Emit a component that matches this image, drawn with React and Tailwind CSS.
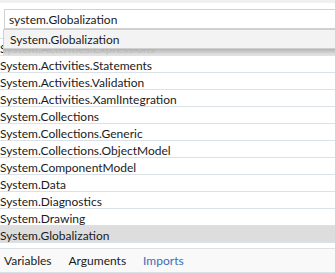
const rows = [
  "System.Activities.Expressions",
  "System.Activities.Statements",
  "System.Activities.Validation",
  "System.Activities.XamlIntegration",
  "System.Collections",
  "System.Collections.Generic",
  "System.Collections.ObjectModel",
  "System.ComponentModel",
  "System.Data",
  "System.Diagnostics",
  "System.Drawing",
  "System.Globalization",
  "System.IO",
  "System.Linq",
];

export default function App() {
  return (
    <div className="w-[335px] h-[273px] bg-white flex flex-col overflow-hidden text-[12px] text-[#1b1b1b] font-['Lato',sans-serif]">
      <div className="h-[3px] bg-[#f0f0f0] shrink-0" />

      {/* Imports list */}
      <div className="relative h-[245px] shrink-0 overflow-hidden">
        {/* editing row */}
        <div className="h-[36px] pt-[6px] pl-[4px] border-b border-[#dae2e7]">
          <div className="h-[20px] border border-r-0 border-[#d2d2d2] bg-white pl-[4px] pt-[2px] leading-[16px] whitespace-nowrap">
            system.Globalization
          </div>
        </div>

        {rows.map((name) => (
          <div
            key={name}
            className={`h-[17px] border-b border-[#dae2e7] pt-[3px] leading-[13px] whitespace-nowrap ${
              name === "System.Globalization" ? "bg-[#dddddd]" : ""
            }`}
          >
            {name}
          </div>
        ))}

        {/* autocomplete dropdown */}
        <div className="absolute left-[3px] right-0 top-[26px] flex flex-col">
          <div className="h-[20px] border border-r-0 border-[#cfcfcf] bg-[#f3f3f3] pl-[6px] pt-[2px] leading-[16px] whitespace-nowrap">
            System.Globalization
          </div>
          <div className="h-[6px] bg-gradient-to-b from-[rgba(178,178,178,0.96)] to-[rgba(224,224,224,0.9)]" />
        </div>
      </div>

      {/* tab strip */}
      <div className="h-[25px] shrink-0 border-t border-b border-[#dae2e7] bg-[#f9f9f9] flex items-center gap-[17px] pl-[4px]">
        <span>Variables</span>
        <span>Arguments</span>
        <span className="text-[#3d6db3]">Imports</span>
      </div>
    </div>
  );
}
